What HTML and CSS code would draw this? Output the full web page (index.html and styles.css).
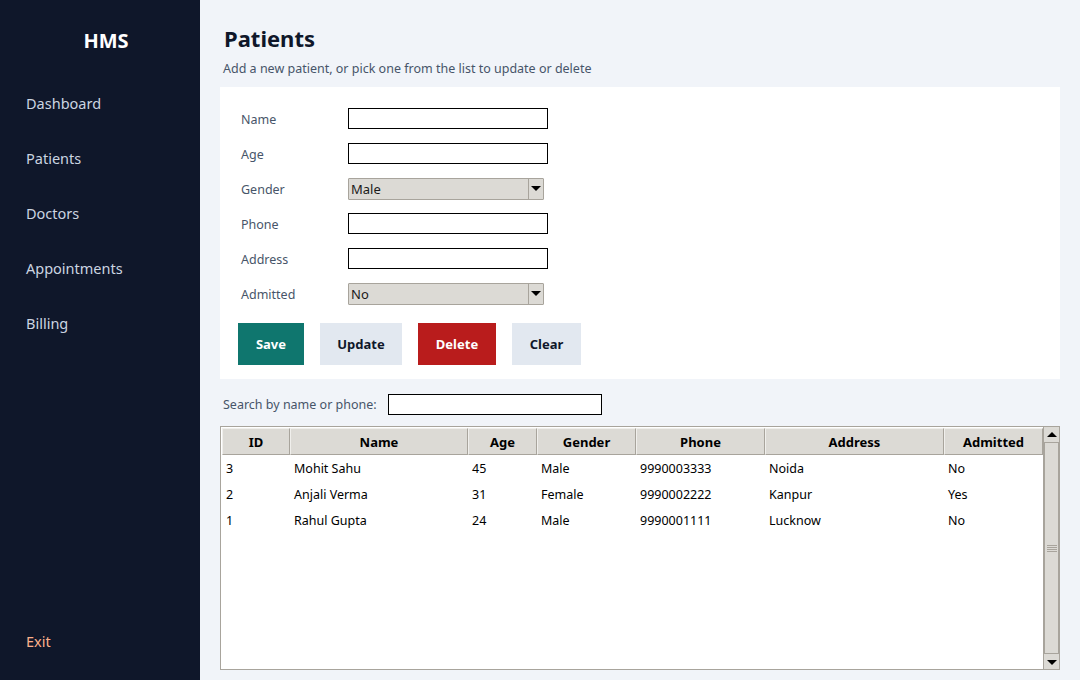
FILE: index.html
```html
<!DOCTYPE html>
<html>
<head>
<meta charset="utf-8">
<link rel="stylesheet" href="styles.css">
</head>
<body>
<div class="app">
  <aside class="sidebar">
    <div class="brand">HMS</div>
    <nav class="nav">
      <div class="nav-item">Dashboard</div>
      <div class="nav-item">Patients</div>
      <div class="nav-item">Doctors</div>
      <div class="nav-item">Appointments</div>
      <div class="nav-item">Billing</div>
    </nav>
    <div class="exit">Exit</div>
  </aside>
  <main class="main">
    <h1 class="title">Patients</h1>
    <p class="subtitle">Add a new patient, or pick one from the list to update or delete</p>
    <section class="card">
      <div class="form">
        <div class="row"><span class="label">Name</span><span class="entry"></span></div>
        <div class="row"><span class="label">Age</span><span class="entry"></span></div>
        <div class="row"><span class="label">Gender</span><span class="combo"><span class="combo-text">Male</span><span class="combo-btn"><span class="tri"></span></span></span></div>
        <div class="row"><span class="label">Phone</span><span class="entry"></span></div>
        <div class="row"><span class="label">Address</span><span class="entry"></span></div>
        <div class="row"><span class="label">Admitted</span><span class="combo"><span class="combo-text">No</span><span class="combo-btn"><span class="tri"></span></span></span></div>
      </div>
      <div class="buttons">
        <button class="btn btn-save">Save</button>
        <button class="btn btn-light btn-update">Update</button>
        <button class="btn btn-delete">Delete</button>
        <button class="btn btn-light btn-clear">Clear</button>
      </div>
    </section>
    <div class="search">
      <span class="search-label">Search by name or phone:</span>
      <span class="search-entry"></span>
    </div>
    <div class="table-wrap">
      <div class="table">
        <div class="thead">
          <div class="th c-id">ID</div>
          <div class="th c-name">Name</div>
          <div class="th c-age">Age</div>
          <div class="th c-gender">Gender</div>
          <div class="th c-phone">Phone</div>
          <div class="th c-addr">Address</div>
          <div class="th c-adm">Admitted</div>
        </div>
        <div class="tr">
          <div class="td c-id">3</div><div class="td c-name">Mohit Sahu</div><div class="td c-age">45</div><div class="td c-gender">Male</div><div class="td c-phone">9990003333</div><div class="td c-addr">Noida</div><div class="td c-adm">No</div>
        </div>
        <div class="tr">
          <div class="td c-id">2</div><div class="td c-name">Anjali Verma</div><div class="td c-age">31</div><div class="td c-gender">Female</div><div class="td c-phone">9990002222</div><div class="td c-addr">Kanpur</div><div class="td c-adm">Yes</div>
        </div>
        <div class="tr">
          <div class="td c-id">1</div><div class="td c-name">Rahul Gupta</div><div class="td c-age">24</div><div class="td c-gender">Male</div><div class="td c-phone">9990001111</div><div class="td c-addr">Lucknow</div><div class="td c-adm">No</div>
        </div>
      </div>
      <div class="scrollbar">
        <div class="sb-btn"><span class="tri-up"></span></div>
        <div class="sb-track"><div class="sb-thumb"><span class="grip"></span></div></div>
        <div class="sb-btn"><span class="tri"></span></div>
      </div>
    </div>
  </main>
</div>
</body>
</html>
```
FILE: styles.css
```css
* { box-sizing: border-box; }
html, body { margin: 0; padding: 0; }
body {
  width: 1080px;
  height: 680px;
  overflow: hidden;
  font-family: "Noto Sans", "Open Sans", sans-serif;
  font-size: 13px;
  background: #f1f4f9;
}
.app { display: flex; height: 680px; }
.sidebar {
  width: 200px;
  flex: none;
  background: #0f172a;
  display: flex;
  flex-direction: column;
  color: #cbd5e1;
}
.brand {
  color: #ffffff;
  font-weight: 700;
  font-size: 20px;
  text-align: center;
  padding-top: 27px;
  padding-left: 12px;
  line-height: 28px;
  height: 88px;
}
.nav { display: flex; flex-direction: column; }
.nav-item {
  font-size: 14.5px;
  padding-left: 26px;
  height: 55px;
  line-height: 30px;
  color: #cbd5e1;
}
.exit {
  margin-top: auto;
  padding-left: 26px;
  font-size: 14.5px;
  color: #fcb08a;
  line-height: 30px;
  margin-bottom: 24px;
}
.main {
  flex: 1;
  padding: 0 20px 0 20px;
  display: flex;
  flex-direction: column;
}
.title {
  margin: 22px 0 0 4px;
  font-size: 22px;
  font-weight: 700;
  color: #0f172a;
  line-height: 32px;
}
.subtitle {
  margin: 6px 0 0 3px;
  color: #475569;
  font-size: 12.5px;
  line-height: 18px;
}
.card {
  background: #ffffff;
  margin-top: 9px;
  height: 292px;
  padding: 21px 18px 0 18px;
}
.form { display: flex; flex-direction: column; gap: 14px; padding-left: 3px; }
.row { display: flex; align-items: center; height: 21px; }
.label { width: 107px; color: #475569; font-size: 12.5px; padding-top: 2px; }
.entry {
  width: 200px;
  height: 21px;
  border: 1px solid #000;
  background: #fff;
}
.combo {
  width: 196px;
  height: 22px;
  border: 1px solid #a8a49c;
  background: #dcdad5;
  display: flex;
  align-items: center;
  border-radius: 1px;
}
.combo-text { flex: 1; padding-left: 2px; color: #1a1a1a; font-size: 13px; }
.combo-btn {
  width: 15px;
  height: 20px;
  border-left: 1px solid #a8a49c;
  display: flex;
  align-items: center;
  justify-content: center;
}
.tri {
  width: 0; height: 0;
  border-left: 5px solid transparent;
  border-right: 5px solid transparent;
  border-top: 5px solid #000;
}
.tri-up {
  width: 0; height: 0;
  border-left: 5px solid transparent;
  border-right: 5px solid transparent;
  border-bottom: 5px solid #000;
}
.buttons { display: flex; gap: 16px; margin-top: 19px; }
.btn {
  height: 42px;
  border: none;
  font-family: inherit;
  font-weight: 700;
  font-size: 13px;
  padding: 0;
  color: #fff;
}
.btn-save { background: #0f766e; width: 66px; }
.btn-delete { background: #b91c1c; width: 78px; }
.btn-light { background: #e2e8f0; color: #0f172a; }
.btn-update { width: 82px; }
.btn-clear { width: 69px; }
.search {
  display: flex;
  align-items: center;
  margin-top: 15px;
  height: 21px;
  padding-left: 3px;
}
.search-label { color: #475569; font-size: 12.5px; width: 165px; }
.search-entry { width: 214px; height: 21px; border: 1px solid #000; background: #fff; }
.table-wrap {
  margin-top: 11px;
  height: 244px;
  display: flex;
  border: 1px solid #a8a49c;
  background: #fff;
}
.table { flex: 1; padding: 1px 0 0 1px; }
.thead { display: flex; height: 27px; }
.th {
  background: #dcdad5;
  border: 1px solid #a8a49c;
  border-top-color: #f0efec;
  border-left-color: #f0efec;
  font-weight: 700;
  text-align: center;
  line-height: 26px;
  font-size: 13px;
  color: #000;
}
.tr { display: flex; height: 26px; align-items: center; }
.td { padding-left: 4px; color: #000; font-size: 12.5px; }
.c-id { width: 68px; }
.c-name { width: 178px; }
.c-age { width: 69px; }
.c-gender { width: 99px; }
.c-phone { width: 129px; }
.c-addr { width: 179px; }
.c-adm { width: 99px; }
.scrollbar {
  width: 16px;
  display: flex;
  flex-direction: column;
  background: #dcdad5;
  border-left: 1px solid #a8a49c;
}
.sb-btn {
  height: 14px;
  display: flex;
  align-items: center;
  justify-content: center;
  background: #dcdad5;
}
.sb-track { flex: 1; display: flex; }
.sb-thumb {
  flex: 1;
  margin: 1px 0;
  border: 1px solid #a8a49c;
  background: #dcdad5;
  display: flex;
  align-items: center;
  justify-content: center;
}
.grip {
  width: 10px;
  height: 7px;
  background: repeating-linear-gradient(#a8a49c 0 1px, transparent 1px 2px);
}
```
